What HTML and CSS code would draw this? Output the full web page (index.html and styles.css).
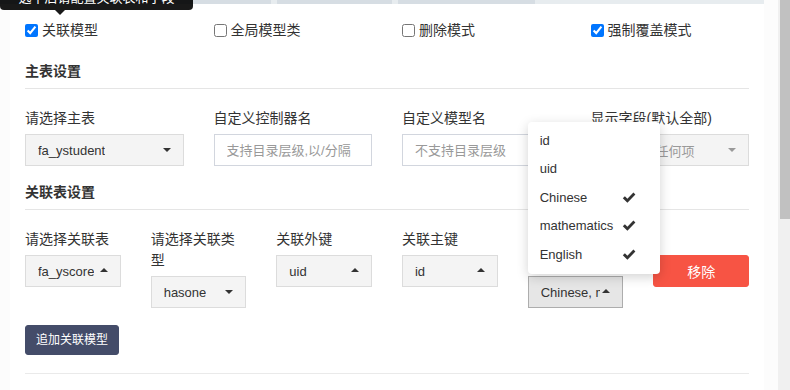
FILE: index.html
```html
<!DOCTYPE html>
<html lang="zh">
<head>
<meta charset="utf-8">
<title>关联模型</title>
<link rel="stylesheet" href="styles.css">
</head>
<body>
<div class="viewport">
  <div class="main">
    <div class="strip">
      <span class="seg dark s1"></span><span class="seg light s2"></span><span class="seg dark s3"></span><span class="seg light s2"></span><span class="seg dark s4"></span><span class="seg light s5"></span>
    </div>
    <div class="panel">
      <div class="row4 checks">
        <label class="col check"><input type="checkbox" checked><span>关联模型</span></label>
        <label class="col check"><input type="checkbox"><span>全局模型类</span></label>
        <label class="col check"><input type="checkbox"><span>删除模式</span></label>
        <label class="col check"><input type="checkbox" checked><span>强制覆盖模式</span></label>
      </div>

      <h4 class="section first">主表设置</h4>
      <div class="row4 fields">
        <div class="col group">
          <label class="lbl">请选择主表</label>
          <div class="sel"><span class="txt">fa_ystudent</span><i class="caret down"></i></div>
        </div>
        <div class="col group">
          <label class="lbl">自定义控制器名</label>
          <input class="inp" type="text" placeholder="支持目录层级,以/分隔">
        </div>
        <div class="col group">
          <label class="lbl">自定义模型名</label>
          <input class="inp" type="text" placeholder="不支持目录层级">
        </div>
        <div class="col group">
          <label class="lbl">显示字段(默认全部)</label>
          <div class="sel"><span class="txt muted">没有选中任何项</span><i class="caret down grey"></i></div>
        </div>
      </div>

      <h4 class="section">关联表设置</h4>
      <div class="row6 fields">
        <div class="col group">
          <label class="lbl">请选择关联表</label>
          <div class="sel"><span class="txt">fa_yscore</span><i class="caret up"></i></div>
        </div>
        <div class="col group">
          <label class="lbl">请选择关联类型</label>
          <div class="sel"><span class="txt">hasone</span><i class="caret down"></i></div>
        </div>
        <div class="col group">
          <label class="lbl">关联外键</label>
          <div class="sel"><span class="txt">uid</span><i class="caret up"></i></div>
        </div>
        <div class="col group">
          <label class="lbl">关联主键</label>
          <div class="sel"><span class="txt">id</span><i class="caret up"></i></div>
        </div>
        <div class="col group">
          <label class="lbl covered">关联表显示字段</label>
          <div class="dropup">
            <ul class="menu">
              <li><span>id</span></li>
              <li><span>uid</span></li>
              <li><span>Chinese</span><svg class="ok" viewBox="0 0 14 12" width="14" height="12"><path d="M0.8 6.2 L2.9 4.3 L5.4 6.8 L11.4 0.6 L13.4 2.6 L5.4 10.8 Z" fill="#333"/></svg></li>
              <li><span>mathematics</span><svg class="ok" viewBox="0 0 14 12" width="14" height="12"><path d="M0.8 6.2 L2.9 4.3 L5.4 6.8 L11.4 0.6 L13.4 2.6 L5.4 10.8 Z" fill="#333"/></svg></li>
              <li><span>English</span><svg class="ok" viewBox="0 0 14 12" width="14" height="12"><path d="M0.8 6.2 L2.9 4.3 L5.4 6.8 L11.4 0.6 L13.4 2.6 L5.4 10.8 Z" fill="#333"/></svg></li>
            </ul>
            <div class="sel active"><span class="txt">Chinese, mathematics, English</span><i class="caret up"></i></div>
          </div>
        </div>
        <div class="col group">
          <label class="lbl">&nbsp;</label>
          <button class="btn-del" type="button">移除</button>
        </div>
      </div>

      <div class="actions">
        <button class="btn-add" type="button">追加关联模型</button>
      </div>
      <hr class="rule">
    </div>

    <div class="tooltip">选中后请配置关联表和字段</div>
    <div class="tooltip-arrow"></div>
  </div>
  <div class="scrollbar"><div class="thumb"></div></div>
</div>
</body>
</html>
```
FILE: styles.css
```css
html, body {
  margin: 0;
  padding: 0;
  height: 390px;
  overflow: hidden;
}
body {
  font-family: "Liberation Sans", "Noto Sans CJK SC", sans-serif;
  font-size: 14px;
  color: #333;
  background: #fff;
}
.viewport {
  display: flex;
  height: 390px;
}
.main {
  position: relative;
  width: 778px;
  background: #fcfcfc;
}
.strip {
  display: flex;
  width: 764px;
  height: 4px;
}
.seg { display: block; height: 4px; }
.dark { background: #d6dde3; }
.light { background: #e7ecef; }
.s1 { width: 271px; }
.s2 { width: 6px; }
.s3 { width: 115px; }
.s4 { width: 137px; }
.s5 { width: 229px; }

.panel {
  width: 754px;
  margin-left: 10px;
  padding-top: 16px;
  height: 370px;
  background: #fff;
}
.row4 {
  display: grid;
  grid-template-columns: repeat(4, 1fr);
}
.row6 {
  display: grid;
  grid-template-columns: repeat(6, 1fr);
}
.col {
  padding: 0 15px;
  min-width: 0;
}
.check {
  display: flex;
  align-items: center;
  height: 21px;
  line-height: 21px;
}
.check input {
  width: 13px;
  height: 13px;
  margin: 0 4px 0 0;
}
.section {
  margin: 20px 15px 0;
  padding-bottom: 6px;
  border-bottom: 1px solid #e5e5e5;
  font-size: 14px;
  font-weight: bold;
  line-height: 21px;
  color: #333;
}
.section:not(.first) { margin-top: 16px; }
.fields { margin-top: 19px; }
.lbl {
  display: block;
  margin-bottom: 5px;
  line-height: 21px;
  font-weight: normal;
  color: #333;
}
.lbl.covered { visibility: hidden; }
.sel {
  position: relative;
  box-sizing: border-box;
  height: 32px;
  border: 1px solid #dcdcdc;
  background: #f4f4f4;
  padding: 0 22px 0 12px;
  display: flex;
  align-items: center;
  font-size: 13px;
  color: #333;
}
.sel.active {
  background: #e6e6e6;
  border-color: #adadad;
}
.txt {
  white-space: nowrap;
  overflow: hidden;
  display: block;
}
.muted { color: #999; }
.caret {
  position: absolute;
  right: 12px;
  top: 50%;
  width: 0;
  height: 0;
  border-left: 4px solid transparent;
  border-right: 4px solid transparent;
}
.caret.down {
  border-top: 4px solid #333;
  margin-top: -2px;
}
.caret.up {
  border-bottom: 4px solid #333;
  margin-top: -3px;
}
.caret.grey { border-top-color: #999; }

.inp {
  display: block;
  box-sizing: border-box;
  width: 100%;
  height: 32px;
  margin: 0;
  border: 1px solid #d2d6de;
  background: #fff;
  padding: 0 12px;
  font-family: inherit;
  font-size: 13px;
  color: #333;
  outline: none;
}
.inp::placeholder { color: #999; }

.dropup { position: relative; }
.menu {
  position: absolute;
  left: 0;
  bottom: calc(100% + 2px);
  width: 132px;
  box-sizing: border-box;
  margin: 0;
  padding: 5px 0;
  list-style: none;
  background: #fff;
  border-radius: 4px;
  box-shadow: 0 3px 12px rgba(0, 0, 0, 0.18);
  z-index: 5;
}
.menu li {
  position: relative;
  height: 28.5px;
  line-height: 28.5px;
  padding: 0 12px;
  font-size: 13px;
  color: #333;
}
.ok {
  position: absolute;
  right: 24px;
  top: 8px;
}

.btn-del {
  display: block;
  width: 100%;
  height: 32px;
  border: 1px solid #f75444;
  border-radius: 3px;
  background: #f75444;
  color: #fff;
  font-family: inherit;
  font-size: 14px;
}
.actions {
  padding: 0 15px;
  margin-top: 17px;
}
.btn-add {
  display: block;
  height: 30px;
  padding: 0 10px;
  border: 1px solid #444c69;
  border-radius: 3px;
  background: #444c69;
  color: #fff;
  font-family: inherit;
  font-size: 12px;
  line-height: 28px;
}
.rule {
  margin: 18px 15px 0;
  border: 0;
  border-top: 1px solid #eaeaea;
  height: 0;
}

.tooltip {
  position: absolute;
  left: 0;
  top: -14px;
  width: 193px;
  height: 24px;
  box-sizing: border-box;
  padding: 3px 8px;
  border-radius: 4px;
  background: rgba(0, 0, 0, 0.9);
  color: #fff;
  font-size: 13px;
  line-height: 18px;
  text-align: center;
  white-space: nowrap;
  overflow: hidden;
}
.tooltip-arrow {
  position: absolute;
  left: 55px;
  top: 10px;
  width: 0;
  height: 0;
  border-left: 5px solid transparent;
  border-right: 5px solid transparent;
  border-top: 5px solid rgba(0, 0, 0, 0.9);
}

.scrollbar {
  width: 12px;
  height: 390px;
  background: #f0f0f0;
}
.thumb {
  margin-left: 2px;
  width: 10px;
  height: 219px;
  background: #c1c1c1;
}
```
